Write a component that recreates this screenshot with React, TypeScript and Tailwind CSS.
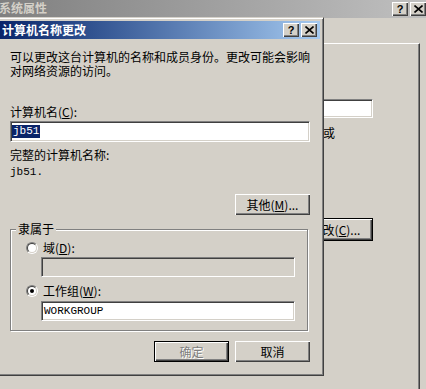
import React from "react";

const raised =
  "bg-[#d4d0c8] shadow-[inset_1px_1px_0_#ffffff,inset_-1px_-1px_0_#404040,inset_-2px_-2px_0_#808080]";
const sunkenBorder =
  "border border-t-[#808080] border-l-[#808080] border-b-white border-r-white shadow-[inset_1px_1px_0_#404040,inset_-1px_-1px_0_#d4d0c8]";

function CapButtons() {
  return (
    <div className="flex gap-[2px]">
      <div className={`w-[16px] h-[14px] flex items-center justify-center ${raised}`}>
        <span className="font-['Liberation_Sans',sans-serif] font-bold text-[11px] leading-[11px] text-black mt-[1px]">
          ?
        </span>
      </div>
      <div className={`w-[16px] h-[14px] flex items-center justify-center ${raised}`}>
        <svg width="9" height="8" viewBox="0 0 9 8" className="-mt-[1px]">
          <path d="M0.5 0.5 L8.5 7.5 M8.5 0.5 L0.5 7.5" stroke="#000" strokeWidth="1.6" fill="none" />
        </svg>
      </div>
    </div>
  );
}

function Radio({ checked }: { checked?: boolean }) {
  return (
    <div className="w-[12px] h-[12px] rounded-full border border-t-[#808080] border-l-[#808080] border-b-white border-r-white flex">
      <div className="flex-1 rounded-full border border-t-[#404040] border-l-[#404040] border-b-[#d4d0c8] border-r-[#d4d0c8] bg-white flex items-center justify-center">
        {checked && <div className="w-[4px] h-[4px] rounded-full bg-black" />}
      </div>
    </div>
  );
}

function Btn({
  children,
  w,
  isDefault,
  disabled,
}: {
  children: React.ReactNode;
  w: string;
  isDefault?: boolean;
  disabled?: boolean;
}) {
  const txt = disabled ? "text-[#808080] [text-shadow:1px_1px_0_#ffffff]" : "text-black";
  if (isDefault) {
    return (
      <div className={`${w} h-[21px] border border-black flex`}>
        <div className={`flex-1 flex items-center justify-center ${raised} ${txt}`}>{children}</div>
      </div>
    );
  }
  return (
    <div className={`${w} h-[21px] flex items-center justify-center ${raised} ${txt}`}>{children}</div>
  );
}

export default function App() {
  return (
    <div className="relative w-[426px] h-[389px] overflow-hidden bg-[#d4d0c8] font-['Noto_Sans_CJK_SC',sans-serif] text-[12px] leading-[13px] text-black">
      {/* Background window: 系统属性 */}
      <div className="flex flex-col w-full h-full">
        <div className="h-[18px] shrink-0 flex items-start justify-between bg-linear-to-r from-[#808080] to-[#c0c0c0]">
          <span className="font-bold text-[#d4d0c8] text-[12px] leading-[16px] -ml-[1px]">系统属性</span>
          <div className="mt-[2px]">
            <CapButtons />
          </div>
        </div>
        <div className="ml-[6px] mt-[25px] w-[414px] h-[400px] border-t border-t-white border-r border-r-[#404040] shadow-[inset_-1px_0_0_#808080] flex flex-col items-start pl-[16px]">
          <div className={`mt-[55px] w-[351px] h-[19px] bg-white ${sunkenBorder}`} />
          <div className="mt-[8px] w-[313px] text-right whitespace-nowrap">例如：“厨房计算机” 或</div>
          <div className="mt-[79px] ml-[276px]">
            <div className="w-[75px] h-[23px] border border-black flex">
              <div className={`flex-1 flex items-center justify-center ${raised}`}>
                更改(<span className="underline">C</span>)...
              </div>
            </div>
          </div>
        </div>
      </div>

      {/* Front dialog: 计算机名称更改 */}
      <div className="absolute left-[-4px] top-[17px] w-[328px] h-[359px] bg-[#d4d0c8] border border-t-[#d4d0c8] border-l-[#d4d0c8] border-r-[#404040] border-b-[#404040] shadow-[inset_1px_1px_0_#ffffff,inset_-1px_-1px_0_#808080] p-[3px] flex flex-col">
        <div className="h-[18px] shrink-0 flex items-center justify-between pl-[2px] pr-[3px] bg-linear-to-r from-[#0a246a] to-[#a6caf0]">
          <span className="font-bold text-white text-[12px] leading-[14px]">计算机名称更改</span>
          <CapButtons />
        </div>

        <div className="flex flex-col pl-[10px] pr-[10px]">
          <p className="mt-[11px] whitespace-nowrap leading-[14px]">
            可以更改这台计算机的名称和成员身份。更改可能会影响
            <br />
            对网络资源的访问。
          </p>

          <div className="mt-[27px]">
            计算机名(<span className="underline">C</span>):
          </div>
          <div className={`mt-[3px] h-[21px] bg-white flex items-center pl-[1px] ${sunkenBorder}`}>
            <span className="bg-[#0a246a] text-white font-['Liberation_Mono',monospace] text-[11px] leading-[13px] px-[1px]">
              jb51
            </span>
          </div>

          <div className="mt-[6px]">完整的计算机名称:</div>
          <div className="mt-[5px] font-['Liberation_Mono',monospace] text-[11px] leading-[13px]">jb51.</div>

          <div className="mt-[15px] self-end">
            <Btn w="w-[75px]">
              其他(<span className="underline">M</span>)...
            </Btn>
          </div>

          <div className="relative mt-[14px] mr-[2px] border border-[#808080] shadow-[inset_1px_1px_0_#ffffff,1px_1px_0_#ffffff] pt-[11px] pb-[9px] flex flex-col">
            <span className="absolute -top-[8px] left-[5px] px-[2px] bg-[#d4d0c8]">隶属于</span>

            <div className="flex items-center h-[13px] ml-[15px] gap-[5px]">
              <Radio />
              <span>
                域(<span className="underline">D</span>):
              </span>
            </div>
            <div className={`mt-[3px] ml-[30px] w-[254px] h-[20px] bg-[#d4d0c8] ${sunkenBorder}`} />

            <div className="mt-[7px] flex items-center h-[13px] ml-[15px] gap-[5px]">
              <Radio checked />
              <span>
                工作组(<span className="underline">W</span>):
              </span>
            </div>
            <div className={`mt-[4px] ml-[30px] w-[254px] h-[20px] bg-white flex items-center pl-[2px] ${sunkenBorder}`}>
              <span className="font-['Liberation_Mono',monospace] text-[11px] leading-[13px]">WORKGROUP</span>
            </div>
          </div>

          <div className="mt-[10px] flex justify-end gap-[6px]">
            <Btn w="w-[75px]" isDefault disabled>
              确定
            </Btn>
            <Btn w="w-[75px]">取消</Btn>
          </div>
        </div>
      </div>
    </div>
  );
}
